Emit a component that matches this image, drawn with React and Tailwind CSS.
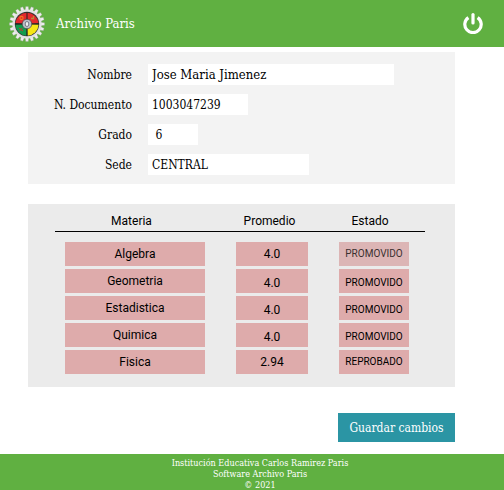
const SLAB = "font-['Roboto_Slab','DejaVu_Serif_Condensed','DejaVu_Serif',serif]";

const fields = [
  { id: "nombre", label: "Nombre", value: "Jose Maria Jimenez", style: "w-[246px] text-[13px]" },
  { id: "documento", label: "N. Documento", value: "1003047239", style: "w-[100px] text-[12px]" },
  { id: "grado", label: "Grado", value: " 6", style: "w-[50px] text-[12px]" },
  { id: "sede", label: "Sede", value: "CENTRAL", style: "w-[161px] text-[12px]" },
];

const subjects = [
  { name: "Algebra", grade: "4.0", status: "PROMOVIDO", locked: true },
  { name: "Geometria", grade: "4.0", status: "PROMOVIDO", low: true },
  { name: "Estadistica", grade: "4.0", status: "PROMOVIDO", low: true },
  { name: "Quimica", grade: "4.0", status: "PROMOVIDO", low: true },
  { name: "Fisica", grade: "2.94", status: "REPROBADO" },
];

const teeth = Array.from({ length: 20 }, (_, i) => i * 18);

function Crest() {
  return (
    <svg viewBox="0 0 36 36" className="size-9" role="img" aria-label="Escudo">
      <g fill="#eeeeee" stroke="#8b958b" strokeWidth="0.3">
        {teeth.map((angle) => (
          <path key={angle} d="M16.2 4.5 L16.7 0.4 H19.3 L19.8 4.5 Z" transform={`rotate(${angle} 18 18)`} />
        ))}
      </g>
      <circle cx="18" cy="18" r="14.6" fill="#e2e2e2" />
      <circle cx="18" cy="18" r="12.2" fill="#333333" />
      <path d="M18 18 L6.4 17 A11.7 11.7 0 0 1 29.6 17 Z" fill="#e3282c" />
      <path d="M18 18 L6.4 18.5 A11.7 11.7 0 0 0 17.5 29.7 Z" fill="#129b4c" />
      <path d="M18 18 L29.6 18.5 A11.7 11.7 0 0 1 18.5 29.7 Z" fill="#f6e616" />
      <path d="M18 6 V30 M6 18 H30" stroke="#202020" strokeWidth="1" />
      <circle cx="12.5" cy="12" r="1.6" fill="none" stroke="#f07a20" strokeWidth="1.1" />
      <path d="M22 12.5 h2.5 v-2.5" fill="none" stroke="#b98a3a" strokeWidth="1.3" />
      <path d="M10 22 l4 3 M10.5 25 l3 -3" stroke="#c33a2c" strokeWidth="1" />
      <circle cx="18" cy="18" r="4.8" fill="#b9bcc4" stroke="#303030" strokeWidth="0.6" />
      <ellipse cx="18" cy="18" rx="1.8" ry="2.5" fill="#f1f1f1" stroke="#5c6270" strokeWidth="0.8" />
    </svg>
  );
}

function PowerIcon() {
  return (
    <svg viewBox="0 0 20 21" className="h-[21px] w-5" fill="none" stroke="white" strokeWidth="3.2" strokeLinecap="round" aria-hidden="true">
      <path d="M10 1.6 V10" />
      <path d="M5.4 4.6 A8.2 8.2 0 1 0 14.6 4.6" strokeLinecap="butt" />
    </svg>
  );
}

export default function App() {
  return (
    <div className={`flex min-h-screen flex-col bg-white text-black ${SLAB}`}>
      <header className="flex h-[47px] items-center bg-[#60b041] pr-[21px] pl-[9px] text-white">
        <Crest />
        <span className="ml-[11px] text-[13px]">Archivo Paris</span>
        <button type="button" aria-label="Cerrar sesión" className="ml-auto">
          <PowerIcon />
        </button>
      </header>

      <main className="mr-[49px] ml-7 flex flex-col pt-[5px]">
        <form id="ficha" className="flex flex-col gap-[9px] bg-[#f3f3f3] pt-3 pb-[9px]">
          {fields.map((field) => (
            <div key={field.id} className="flex items-center gap-4">
              <label htmlFor={field.id} className="w-[104px] text-right text-[12px] leading-5">
                {field.label}
              </label>
              <input
                id={field.id}
                defaultValue={field.value}
                className={`h-[21px] bg-white px-1 ${field.style}`}
              />
            </div>
          ))}
        </form>

        <section className="mt-5 bg-[#ebebeb] pt-[7px] pr-[30px] pb-[13px] pl-[27px] font-[Roboto,sans-serif]">
          <table className="w-full table-fixed border-separate border-spacing-0 text-center text-[12px]">
            <colgroup>
              <col className="w-[165px]" />
              <col className="w-[103px]" />
              <col className="w-[102px]" />
            </colgroup>
            <thead>
              <tr>
                <th className="h-[21px] border-b border-black pr-3 font-normal">Materia</th>
                <th className="h-[21px] border-b border-black pr-1 font-normal">Promedio</th>
                <th className="h-[21px] border-b border-black pr-2 font-normal">Estado</th>
              </tr>
              <tr aria-hidden="true">
                <td colSpan={3} className="h-[7px]" />
              </tr>
            </thead>
            <tbody>
              {subjects.map((subject) => (
                <tr key={subject.name}>
                  <td className="pt-[3px] pr-[15px] pl-[10px]">
                    <div className="h-6 bg-[#deabab] leading-6">{subject.name}</div>
                  </td>
                  <td className="pt-[3px] pr-[15px] pl-4">
                    <div className={`h-6 bg-[#deabab] leading-6 ${subject.low ? "pt-[2px]" : ""}`}>{subject.grade}</div>
                  </td>
                  <td className="px-4 pt-[3px]">
                    <div
                      className={`h-6 text-[10px] leading-6 ${subject.low ? "pt-[2px]" : ""} ${
                        subject.locked ? "bg-[#dcb5b5] text-[#3a3030]" : "bg-[#deabab]"
                      }`}
                    >
                      {subject.status}
                    </div>
                  </td>
                </tr>
              ))}
            </tbody>
          </table>
        </section>

        <button form="ficha" type="button" className="mt-[26px] h-[29px] w-[117px] self-end bg-[#2b95a4] text-[12px] text-white">
          Guardar cambios
        </button>
      </main>

      <footer className="mt-3 grow bg-[#60b041] pt-1 pl-4 text-center text-[9px] leading-[11px] text-white">
        <p>Institución Educativa Carlos Ramirez Paris</p>
        <p>Software Archivo Paris</p>
        <p>© 2021</p>
      </footer>
    </div>
  );
}
